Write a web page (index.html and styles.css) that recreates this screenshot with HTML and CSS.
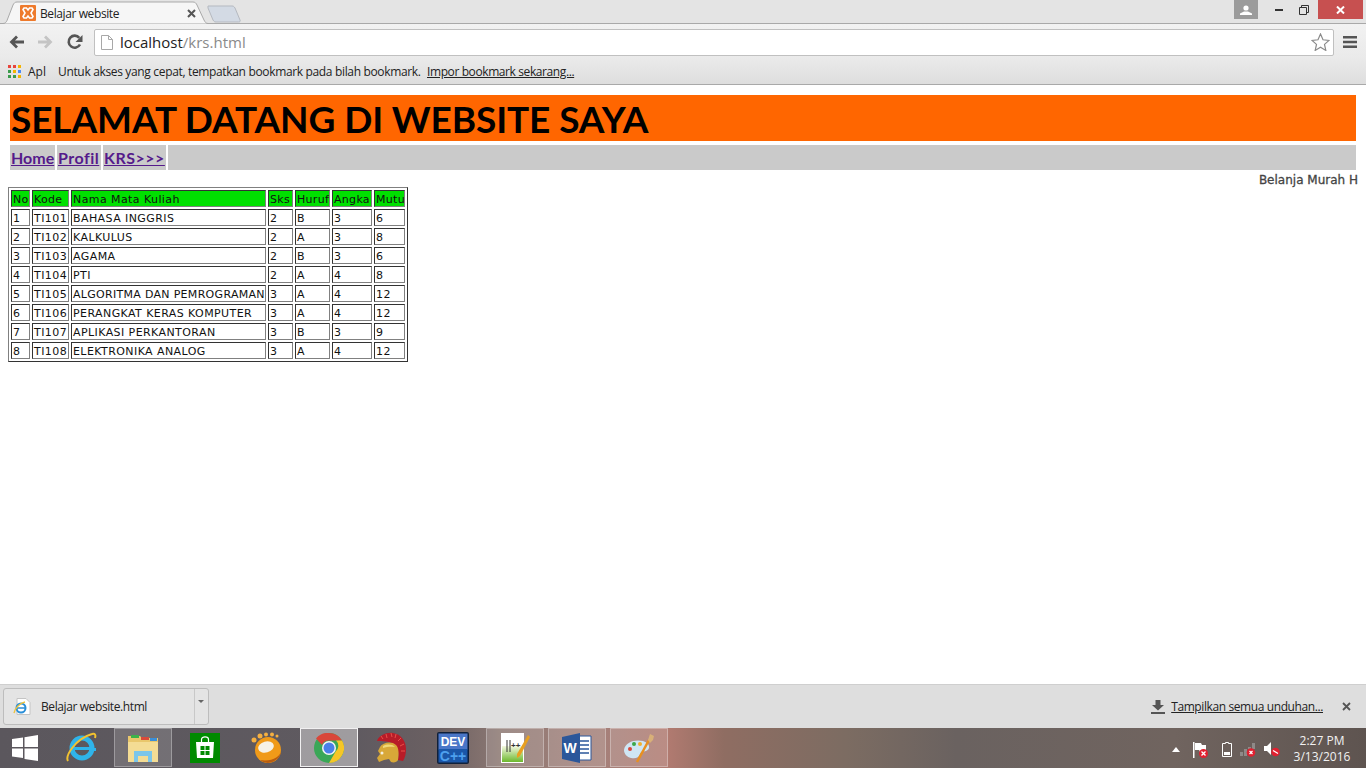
FILE: index.html
```html
<!DOCTYPE html>
<html lang="id">
<head>
  <meta charset="UTF-8" />
  <title>Belajar website</title>
  <link rel="stylesheet" href="styles.css">
</head>
<body>
  <div class="tabstrip">
    <div class="tab">
      <svg class="tab-shape" width="212" height="24" viewBox="0 0 212 24"><path d="M0 23.5h3c2 0 3-1 4-3L13 5c1-2 2-3 4-3h176c2 0 3 1 4 3l7 15c1 2 2 3.500 4 3.500h4" fill="#f6f6f6" stroke="#a9a9a9"/></svg>
      <svg class="favicon" width="16" height="16" viewBox="0 0 16 16"><rect width="16" height="16" rx="1" fill="#ee7a2c"/><path d="M4 3h2.500L8 5l1.500-2H12l1 1.500L11 8l2 3.500-1 1.500H9.500L8 11l-1.500 2H4l-1-1.500L5 8 3 4.500z" fill="none" stroke="#fff" stroke-width="1.600"/></svg>
      <span class="tab-title">Belajar website</span>
      <svg class="tab-x" width="9" height="9" viewBox="0 0 9 9"><path d="M1 1l7 7M8 1L1 8" stroke="#555" stroke-width="2"/></svg>
    </div>
    <svg class="newtab" width="34" height="18" viewBox="0 0 34 18"><path d="M1 1h24c1.500 0 2 .5 3 2l5 12c.5 1.500 0 2-1.500 2H9c-1.500 0-2-.5-3-2L1 3z" fill="#d3dae4" stroke="#b5b9c0"/></svg>
    <div class="wincontrols">
      <div class="userbox"><svg width="12" height="10" viewBox="0 0 12 10"><circle cx="6" cy="3" r="2.600" fill="#fff"/><path d="M0 10V8.500L4 6.500h4l4 2V10z" fill="#fff"/></svg></div>
      <div class="winbtn"><svg width="8" height="3" viewBox="0 0 8 3"><rect width="8" height="2" y="1" fill="#333"/></svg></div>
      <div class="winbtn"><svg width="10" height="10" viewBox="0 0 10 10"><path d="M.5 2.500h7v7h-7zM2.500 2.500v-2h7v7h-2" fill="none" stroke="#333"/></svg></div>
      <div class="closebtn"><svg width="9" height="8" viewBox="0 0 9 8"><path d="M1 .5l7 7M8 .5l-7 7" stroke="#fff" stroke-width="2"/></svg></div>
    </div>
  </div>

  <div class="toolbar">
    <svg class="nav-ico" width="16" height="14" viewBox="0 0 16 14"><path d="M15 7H3M8 1.500L2.500 7 8 12.500" fill="none" stroke="#555" stroke-width="2.800"/></svg>
    <svg class="nav-ico" width="16" height="14" viewBox="0 0 16 14"><path d="M1 7h12M8 1.500L13.500 7 8 12.500" fill="none" stroke="#c4c4c4" stroke-width="2.800"/></svg>
    <svg class="nav-ico reload" width="16" height="16" viewBox="0 0 16 16"><path d="M13 10.500A6 6 0 1 1 12.300 3.800" fill="none" stroke="#555" stroke-width="2.600"/><path d="M15.500 1v7h-7z" fill="#555"/></svg>
    <div class="omnibox">
      <svg width="12" height="15" viewBox="0 0 12 15"><path d="M.5.500h7l4 4v10H.5zM7.500.500v4h4" fill="#fff" stroke="#a8a8a8"/></svg>
      <span class="url">localhost<span class="url-path">/krs.html</span></span>
      <svg class="star" width="19" height="18" viewBox="0 0 19 18"><path d="M9.500 1l2.500 5.800 6 .6-4.500 4 1.300 6-5.300-3.100-5.300 3.100 1.300-6-4.500-4 6-.6z" fill="#fff" stroke="#8a8a8a" stroke-width="1.200"/></svg>
    </div>
    <svg class="menu" width="14" height="12" viewBox="0 0 14 12"><path d="M0 0h14v2.500H0zM0 4.700h14v2.500H0zM0 9.400h14v2.500H0z" fill="#555"/></svg>
  </div>

  <div class="bookmarks">
    <svg width="13" height="13" viewBox="0 0 13 13">
      <rect width="3" height="3" fill="#e8453c"/><rect x="5" width="3" height="3" fill="#e8453c"/><rect x="10" width="3" height="3" fill="#f4b400"/>
      <rect y="5" width="3" height="3" fill="#3b9b4c"/><rect x="5" y="5" width="3" height="3" fill="#f4b400"/><rect x="10" y="5" width="3" height="3" fill="#4a8af4"/>
      <rect y="10" width="3" height="3" fill="#3b9b4c"/><rect x="5" y="10" width="3" height="3" fill="#3b9b4c"/><rect x="10" y="10" width="3" height="3" fill="#f4b400"/>
    </svg>
    <span class="apl">Apl</span>
    <span class="bm-note">Untuk akses yang cepat, tempatkan bookmark pada bilah bookmark.</span>
    <span class="bm-link">Impor bookmark sekarang...</span>
  </div>

  <div class="page">
    <h1 class="banner">SELAMAT DATANG DI WEBSITE SAYA</h1>
    <div class="navbar">
      <a class="navcell">Home</a>
      <a class="navcell">Profil</a>
      <a class="navcell">KRS&gt;&gt;&gt;</a>
      <div class="navrest"></div>
    </div>
    <div class="marquee"><span>Belanja Murah H</span></div>
    <table class="krs">
      <thead>
        <tr>
          <th class="c-no">No</th><th class="c-kode">Kode</th><th class="c-nama">Nama Mata Kuliah</th><th class="c-sks">Sks</th><th class="c-huruf">Huruf</th><th class="c-angka">Angka</th><th class="c-mutu">Mutu</th>
        </tr>
      </thead>
      <tbody>
        <tr><td>1</td><td>TI101</td><td>BAHASA INGGRIS</td><td>2</td><td>B</td><td>3</td><td>6</td></tr>
        <tr><td>2</td><td>TI102</td><td>KALKULUS</td><td>2</td><td>A</td><td>3</td><td>8</td></tr>
        <tr><td>3</td><td>TI103</td><td>AGAMA</td><td>2</td><td>B</td><td>3</td><td>6</td></tr>
        <tr><td>4</td><td>TI104</td><td>PTI</td><td>2</td><td>A</td><td>4</td><td>8</td></tr>
        <tr><td>5</td><td>TI105</td><td class="tight">ALGORITMA DAN PEMROGRAMAN</td><td>3</td><td>A</td><td>4</td><td>12</td></tr>
        <tr><td>6</td><td>TI106</td><td>PERANGKAT KERAS KOMPUTER</td><td>3</td><td>A</td><td>4</td><td>12</td></tr>
        <tr><td>7</td><td>TI107</td><td>APLIKASI PERKANTORAN</td><td>3</td><td>B</td><td>3</td><td>9</td></tr>
        <tr><td>8</td><td>TI108</td><td>ELEKTRONIKA ANALOG</td><td>3</td><td>A</td><td>4</td><td>12</td></tr>
      </tbody>
    </table>
  </div>

  <div class="downloads">
    <div class="dl-item">
      <div class="dl-main">
        <svg width="18" height="18" viewBox="0 0 18 18"><path d="M4 .5h9l4 4v12H4z" fill="#fff" stroke="#c4c4c4"/><circle cx="8" cy="10" r="4.500" fill="none" stroke="#2a8fd8" stroke-width="2"/><path d="M4 10h8" stroke="#2a8fd8" stroke-width="1.500"/><path d="M1 15c1-5 6-10 11-11" fill="none" stroke="#eec23c" stroke-width="1.300"/></svg>
        <span>Belajar website.html</span>
      </div>
      <div class="dl-arrow"></div>
    </div>
    <div class="dl-right">
      <svg width="14" height="14" viewBox="0 0 14 14"><path d="M4.500 0h5v5H13L7 10.500 1 5h3.500zM0 12h14v2H0z" fill="#555"/></svg>
      <span class="dl-all">Tampilkan semua unduhan...</span>
      <svg class="dl-x" width="9" height="9" viewBox="0 0 9 9"><path d="M1 1l7 7M8 1L1 8" stroke="#555" stroke-width="1.800"/></svg>
    </div>
  </div>

  <div class="taskbar">
    <div class="startbtn">
      <svg width="26" height="26" viewBox="0 0 26 26"><path d="M0 4l11-1.500V12H0zM12.500 2.300L26 0v12H12.500zM0 13.500h11V23L0 21.500zM12.500 13.500H26V26l-13.500-2z" fill="#fff"/></svg>
    </div>
    <div class="slot">
      <svg width="32" height="32" viewBox="0 0 32 32"><circle cx="17" cy="16" r="10" fill="none" stroke="#2fb4ea" stroke-width="5"/><path d="M7 15h20v3H7z" fill="#2fb4ea"/><path d="M26 16h5v3h-5z" fill="#2fb4ea"/><path d="M3 29C0 24 10 7 27 2c3-1 4 1 3 4" fill="none" stroke="#f2c230" stroke-width="2"/></svg>
    </div>
    <div class="slot slot-open">
      <svg width="32" height="30" viewBox="0 0 32 30"><path d="M1 3h12l2 2h16v24H1z" fill="#e9c76c"/><path d="M4 2h8v3H4z" fill="#3cb24a"/><path d="M14 4h8v3h-8z" fill="#d84a3a"/><path d="M23 5h7v3h-7z" fill="#3b8fd8"/><path d="M1 9h30v20H1z" fill="#f4dc94"/><path d="M7 18h18v11h-4v-6H11v6H7z" fill="#7cc6ea"/></svg>
    </div>
    <div class="slot">
      <svg width="30" height="30" viewBox="0 0 30 30"><rect width="30" height="30" fill="#008a00"/><path d="M6 9h18l-1 16H7z" fill="#fff"/><path d="M11.500 9V6.500c0-3.500 7-3.500 7 0V9" fill="none" stroke="#fff" stroke-width="1.200"/><path d="M10.500 13H14.500v4h-4zM15.500 13h4v4h-4zM10.500 18H14.500v4h-4zM15.500 18h4v4h-4z" fill="#008a00"/></svg>
    </div>
    <div class="slot">
      <svg width="32" height="32" viewBox="0 0 32 32"><circle cx="17" cy="18" r="13" fill="#f09a18"/><path d="M9 28a13 13 0 0 0 21-10c0 7-10 12-21 10z" fill="#b85c10"/><circle cx="3" cy="8" r="2.500" fill="#f6b040"/><circle cx="9" cy="4" r="2.500" fill="#f6b040"/><circle cx="15" cy="2.500" r="2" fill="#f6b040"/><circle cx="21" cy="2.500" r="2" fill="#f6b040"/><circle cx="26" cy="4" r="1.500" fill="#f6b040"/><ellipse cx="15" cy="15" rx="8" ry="5.500" fill="#f6f2e6" transform="rotate(-15 15 15)"/></svg>
    </div>
    <div class="slot slot-active">
      <svg width="30" height="30" viewBox="0 0 30 30"><circle cx="15" cy="15" r="15" fill="#3aa757"/><path d="M15 0a15 15 0 0 1 13 7.500H15a7.500 7.500 0 0 0-7 4.500L2 5.500A15 15 0 0 1 15 0z" fill="#d9463a"/><path d="M28 7.500A15 15 0 0 1 15 30l6.500-11.200A7.500 7.500 0 0 0 22 7.500z" fill="#f6c626"/><circle cx="15" cy="15" r="7" fill="#f4f4f4"/><circle cx="15" cy="15" r="5.500" fill="#4a80e8"/></svg>
    </div>
    <div class="slot">
      <svg width="32" height="32" viewBox="0 0 32 32"><path d="M2 9C4 3 12 0 18 1c8 1 13 8 13 16 0 5-1 9-3 12l-5-1c1-8 0-13-4-16C14 9 7 9 2 9z" fill="#b81c28"/><path d="M6 4l2 3M11 2l1 4M16 1l1 4M21 2l-1 4M26 6l-3 3M29 12l-4 2M30 19l-4 0" stroke="#e85048" stroke-width="1"/><path d="M5 15c3-5 12-6 16-2 3 3 3 9 2 15-1 2-4 3-7 2l-2-3-5 1-5 2-2-4 3-4-2-3z" fill="#d8a838"/><path d="M8 14c4-2 9-2 12 1-3-.5-8-.5-12 1z" fill="#f0d878"/><circle cx="7" cy="21" r="1.500" fill="#f4f0e0"/></svg>
    </div>
    <div class="slot">
      <svg width="32" height="32" viewBox="0 0 32 32"><rect width="32" height="32" rx="2" fill="#10203a"/><rect x="1.500" y="1.500" width="29" height="16" fill="#4a76c8"/><rect x="1.500" y="17" width="29" height="13.500" fill="#1a56a8"/><text x="16" y="14" class="ico-dev">DEV</text><text x="16" y="28.500" class="ico-cpp">C++</text></svg>
    </div>
    <div class="slot slot-open">
      <svg width="32" height="32" viewBox="0 0 32 32"><defs><linearGradient id="npp" x1="0" y1="0" x2="0" y2="1"><stop offset="0" stop-color="#f4f8e0"/><stop offset="1" stop-color="#6cb82c"/></linearGradient></defs><path d="M2 1h23v30H2z" fill="#fff"/><path d="M3 14h21v16H3z" fill="url(#npp)"/><path d="M8 8v12M11 8v12" stroke="#333" fill="none"/><text x="12" y="16" class="ico-pp">++</text><path d="M29 3l2 2-10 19-3 2 0-4z" fill="#e8a020"/></svg>
    </div>
    <div class="slot slot-open">
      <svg width="32" height="32" viewBox="0 0 32 32"><path d="M16 4h14v24H16z" fill="#fff" stroke="#2b579a"/><path d="M19 9h9M19 13h9M19 17h9M19 21h9" stroke="#2b579a" stroke-width="1.500"/><path d="M1 5L19 1v30L1 27z" fill="#2b579a"/><text x="9" y="21" class="ico-w">W</text></svg>
    </div>
    <div class="slot slot-open">
      <svg width="32" height="32" viewBox="0 0 32 32"><path d="M1 18C2 10 12 7 20 9c7 2 8 8 3 10-3 1-5 0-6 3-1 4-5 5-9 4-4-1-7-4-7-8z" fill="#cfe6f4"/><circle cx="7" cy="17" r="2" fill="#d8483a"/><circle cx="11" cy="12" r="2" fill="#3ca84a"/><circle cx="17" cy="12" r="2" fill="#f0b030"/><path d="M14 30L26 8" stroke="#e89020" stroke-width="2.500"/><path d="M25 8l2-6 4 2-1 4-3 3z" fill="#d8b078"/></svg>
    </div>
    <div class="tray">
      <svg class="t-arrow" width="8" height="5" viewBox="0 0 8 5"><path d="M4 0l4 5H0z" fill="#fff"/></svg>
      <svg class="t-flag" width="16" height="16" viewBox="0 0 16 16"><path d="M1 0h1.500v16H1zM3 1h6l1 2h4v7H8L7 8H3z" fill="#fff"/><circle cx="11.500" cy="11.500" r="4.500" fill="#e02030"/><path d="M9.500 9.500l4 4M13.500 9.500l-4 4" stroke="#fff" stroke-width="1.300"/></svg>
      <svg class="t-batt" width="10" height="15" viewBox="0 0 10 15"><path d="M3.500 .5h3v1h3v13H.5v-13h3z" fill="none" stroke="#fff"/><rect x="2" y="10" width="6" height="3" fill="#fff"/></svg>
      <svg class="t-sig" width="16" height="14" viewBox="0 0 16 14"><path d="M0 9h3v4H0zM4 6h3v7H4zM8 4h3v2H8zM12 0h3v6h-3z" fill="#8e8a88"/><circle cx="11" cy="9.500" r="4.300" fill="#e02030"/><path d="M9.500 8l3 3M12.500 8l-3 3" stroke="#fff" stroke-width="1.200"/></svg>
      <svg class="t-vol" width="16" height="15" viewBox="0 0 16 15"><path d="M0 4h3l4-4v13L3 9H0z" fill="#fff"/><circle cx="11.500" cy="10" r="4.300" fill="#e02030"/><path d="M9 8.500l5 3" stroke="#fff" stroke-width="1.300"/></svg>
    </div>
    <div class="clock">
      <div>2:27 PM</div>
      <div>3/13/2016</div>
    </div>
  </div>
</body>
</html>
```

FILE: styles.css
```css
html, body { margin: 0; height: 768px; overflow: hidden; background: #fff; }
body { display: flex; flex-direction: column; font-family: "Open Sans", "Noto Sans", sans-serif; }

/* barra de abas */
.tabstrip { height: 24px; background: #e4e4e4; border-bottom: 1px solid #a9a9a9; box-sizing: border-box; display: flex; align-items: flex-start; }
.tab { position: relative; width: 212px; height: 24px; flex: none; display: flex; align-items: center; padding-left: 20px; box-sizing: border-box; }
.tab-shape { position: absolute; left: 0; top: 0; }
.favicon { position: relative; flex: none; margin-top: 2px; }
.tab-title { position: relative; font-size: 12px; letter-spacing: -.4px; color: #222; margin-left: 4px; width: 147px; padding-top: 2px; }
.tab-x { position: relative; margin-top: 3px; }
.newtab { margin: 5px 0 0 -5px; flex: none; }
.wincontrols { margin-left: auto; display: flex; align-items: flex-start; padding-right: 3px; }
.userbox { width: 24px; height: 19px; background: #9b9b9b; display: flex; align-items: center; justify-content: center; margin-right: 8px; }
.winbtn { width: 25px; height: 19px; display: flex; align-items: center; justify-content: center; }
.closebtn { width: 45px; height: 19px; background: #c75050; display: flex; align-items: center; justify-content: center; margin-left: 2px; }

/* barra de endereco */
.toolbar { height: 34px; background: linear-gradient(#f2f2f2, #eaeaea); display: flex; align-items: center; padding: 2px 0 0 9px; box-sizing: border-box; }
.nav-ico { flex: none; margin-right: 12px; }
.reload { margin: 0 11px 0 2px; }
.omnibox { flex: 1; height: 27px; margin-right: 9px; background: #fff; border: 1px solid #c0c0c0; border-radius: 2px; box-sizing: border-box; display: flex; align-items: center; padding: 0 3px 0 6px; }
.url { font-size: 15px; color: #222; margin-left: 7px; }
.url-path { color: #8a8a8a; }
.star { margin-left: auto; }
.menu { flex: none; margin-right: 9px; }

/* favoritos */
.bookmarks { height: 27px; background: linear-gradient(#eaeaea, #dedede); border-bottom: 1px solid #a9a9a9; box-sizing: border-box; display: flex; align-items: center; padding-left: 8px; font-size: 12px; letter-spacing: -.34px; color: #222; }
.apl { margin-left: 7px; width: 30px; letter-spacing: 0; }
.bm-note { width: 369px; white-space: nowrap; }
.bm-link { text-decoration: underline; white-space: nowrap; letter-spacing: -.4px; }

/* pagina */
.page { flex: 1; min-height: 0; padding: 10px 10px 0 8px; overflow: hidden; }
.banner { margin: 0 0 4px 2px; height: 46px; background: #ff6600; color: #000; font: bold 37px/48px "Comic Sans MS", Lato, sans-serif; letter-spacing: -.1px; white-space: nowrap; padding-left: 1px; }
.navbar { display: flex; gap: 2px; margin-left: 2px; height: 25px; }
.navcell { background: #cacaca; padding: 0 1px; color: #551a8b; font: bold 16px/25px "Comic Sans MS", Lato, sans-serif; text-decoration: underline; box-sizing: border-box; }
.navcell:nth-child(1) { width: 45px; }
.navcell:nth-child(2) { width: 44px; letter-spacing: .5px; }
.navcell:nth-child(3) { width: 63px; letter-spacing: .5px; }
.navrest { flex: 1; background: #cacaca; }
.marquee { height: 17px; margin-right: -2px; display: flex; justify-content: flex-end; font: 12px/21px "DejaVu Sans", sans-serif; color: #444; -webkit-text-stroke: .3px #444; white-space: nowrap; }

.krs { width: 400px; table-layout: fixed; border: 1px solid; border-color: #808080 #333 #333 #808080; border-spacing: 2px; border-collapse: separate; font: 11px/13px "DejaVu Sans", sans-serif; letter-spacing: .42px; color: #111; }
.krs th, .krs td { border: 1px solid; border-color: #333 #808080 #808080 #333; padding: 2px 1px 0; text-align: left; font-weight: normal; white-space: nowrap; overflow: hidden; }
.krs th { background: #00e000; letter-spacing: .3px; }
.krs th.c-nama { letter-spacing: .42px; }
.krs td.tight { letter-spacing: .3px; }
.c-no { width: 19px; box-sizing: border-box; }
.c-kode { width: 37px; box-sizing: border-box; }
.c-nama { width: 195px; box-sizing: border-box; }
.c-sks { width: 25px; box-sizing: border-box; }
.c-huruf { width: 35px; box-sizing: border-box; }
.c-angka { width: 40px; box-sizing: border-box; }
.c-mutu { width: 31px; box-sizing: border-box; }

/* barra de downloads */
.downloads { height: 44px; flex: none; background: #dedede; border-top: 1px solid #cfcfcf; box-sizing: border-box; display: flex; align-items: center; padding: 0 15px 0 3px; font-size: 12px; letter-spacing: -.4px; color: #222; }
.dl-item { width: 206px; height: 37px; border: 1px solid #bdbdbd; border-radius: 3px; box-sizing: border-box; display: flex; background: #e4e4e4; }
.dl-main { flex: 1; display: flex; align-items: center; gap: 10px; padding-left: 9px; border-right: 1px solid #c8c8c8; }
.dl-arrow { width: 13px; position: relative; }
.dl-arrow::after { content: ""; position: absolute; left: 3px; top: 11px; border: 3px solid transparent; border-top: 3px solid #666; }
.dl-right { margin-left: auto; display: flex; align-items: center; }
.dl-all { text-decoration: underline; margin: 0 19px 0 6px; }

/* barra de tarefas */
.taskbar { height: 40px; flex: none; display: flex; align-items: center; color: #fff; background: linear-gradient(90deg, #5b575d 0, #5f5a60 26%, #6b6062 32%, #8f7a74 37%, #a5807a 44%, #b07a70 49%, #8f6d62 53%, #7c6c62 62%, #6a6260 70%, #70645f 86%, #5e5450 100%); }
.startbtn { width: 50px; height: 40px; flex: none; display: flex; align-items: center; justify-content: center; }
.slot { width: 58px; height: 39px; margin: 0 2px; flex: none; display: flex; align-items: center; justify-content: center; box-sizing: border-box; align-self: flex-start; }
.slot-open { background: rgba(255,255,255,.14); border: 1px solid rgba(255,255,255,.3); }
.slot-active { background: rgba(255,255,255,.4); border: 1px solid rgba(255,255,255,.85); }
.ico-dev { font: bold 12px "Liberation Sans", sans-serif; fill: #fff; text-anchor: middle; }
.ico-cpp { font: bold 14px "Liberation Sans", sans-serif; fill: #4ea0ee; text-anchor: middle; }
.ico-pp { font: bold 8px "Liberation Sans", sans-serif; fill: #333; }
.ico-w { font: bold 14px "Liberation Sans", sans-serif; fill: #fff; text-anchor: middle; }
.tray { margin-left: auto; display: flex; align-items: center; padding-top: 3px; }
.t-flag { margin-left: 12px; }
.t-batt { margin-left: 14px; }
.t-sig { margin-left: 8px; }
.t-vol { margin-left: 8px; }
.clock { width: 72px; margin: 1px 8px 0 6px; font-size: 12px; line-height: 16px; text-align: center; color: #f2f2f2; }
```
